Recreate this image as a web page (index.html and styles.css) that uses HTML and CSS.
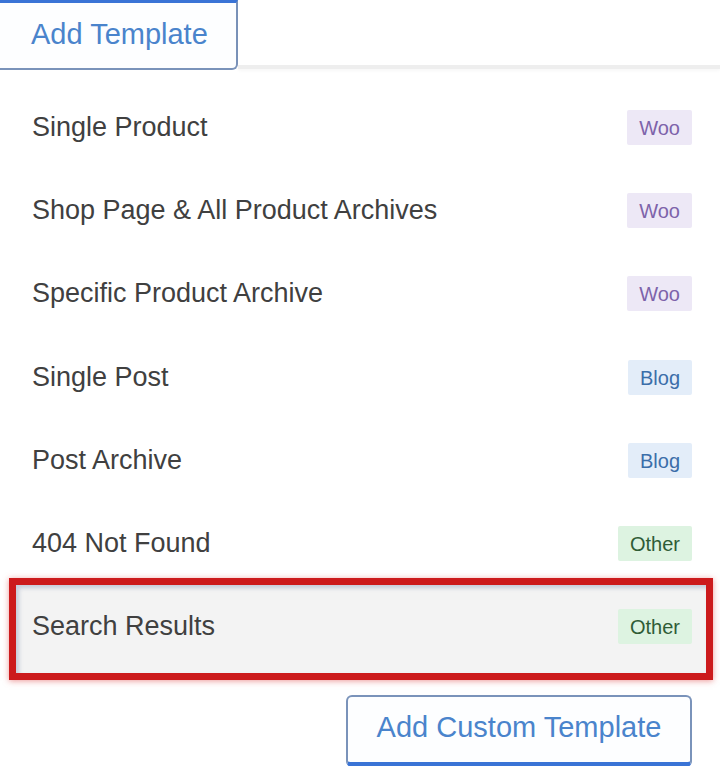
FILE: index.html
```html
<!DOCTYPE html>
<html>
<head>
<meta charset="utf-8">
<link rel="stylesheet" href="styles.css">
</head>
<body>
<div class="page">
  <div class="tabs">
    <button class="tab-btn">Add Template</button>
    <div class="tab-line"></div>
  </div>
  <ul class="list">
    <li class="row"><span class="name">Single Product</span><span class="badge woo">Woo</span></li>
    <li class="row"><span class="name">Shop Page &amp; All Product Archives</span><span class="badge woo">Woo</span></li>
    <li class="row"><span class="name">Specific Product Archive</span><span class="badge woo">Woo</span></li>
    <li class="row"><span class="name">Single Post</span><span class="badge blog">Blog</span></li>
    <li class="row"><span class="name">Post Archive</span><span class="badge blog">Blog</span></li>
    <li class="row"><span class="name">404 Not Found</span><span class="badge other">Other</span></li>
    <li class="row active"><span class="name">Search Results</span><span class="badge other">Other</span><span class="mark"></span></li>
  </ul>
  <div class="footer">
    <button class="custom-btn">Add Custom Template</button>
  </div>
</div>
</body>
</html>
```

FILE: styles.css
```css
html, body {
  margin: 0;
  padding: 0;
  background: #ffffff;
  overflow: hidden;
}
.page {
  width: 720px;
  height: 766px;
  font-family: "Liberation Sans", Arial, sans-serif;
  overflow: hidden;
}
.tabs {
  display: flex;
  align-items: stretch;
  height: 70px;
}
.tab-btn {
  margin-left: -10px;
  width: 248px;
  height: 70px;
  box-sizing: border-box;
  border: 2px solid #7a93ba;
  border-top: 3px solid #3a74d6;
  border-radius: 0 0 6px 0;
  background: #fdfeff;
  color: #4a84cc;
  font-family: "Liberation Sans", Arial, sans-serif;
  font-size: 29px;
  text-align: left;
  padding: 0 0 2px 39px;
}
.tab-line {
  flex: 1;
  border-bottom: 4px solid #eeeeee;
  box-shadow: 0 2px 3px rgba(0, 0, 0, 0.03);
  margin-bottom: 1px;
}
.list {
  list-style: none;
  margin: 0;
  padding: 16px 0 0 0;
}
.row {
  position: relative;
  height: 83.17px;
  box-sizing: border-box;
  padding: 0 28px 0 32px;
  display: flex;
  align-items: center;
  justify-content: space-between;
}
.name {
  font-size: 27px;
  color: #404040;
}
.badge {
  height: 35px;
  line-height: 36px;
  padding: 0 12px;
  font-size: 20px;
  border-radius: 2px;
}
.woo {
  background: #ede8f6;
  color: #7d63aa;
}
.blog {
  background: #e3edf9;
  color: #3b6ea9;
}
.other {
  background: #ddf3e1;
  color: #2f5c36;
}
.active {
  z-index: 0;
}
.mark {
  position: absolute;
  z-index: -1;
  top: -7px;
  bottom: -12px;
  left: 9px;
  right: 7px;
  background: #f3f3f3;
  border: 7px solid #cc1a1c;
  box-shadow: 0 1px 6px rgba(220, 50, 50, 0.5), inset 3px 3px 4px rgba(110, 130, 170, 0.35);
  pointer-events: none;
}
.footer {
  display: flex;
  justify-content: flex-end;
  padding: 27px 28px 0 0;
}
.custom-btn {
  width: 346px;
  height: 72px;
  box-sizing: border-box;
  border: 2px solid #7a93ba;
  border-bottom: 5px solid #3a74d6;
  border-radius: 6px;
  background: #fdfeff;
  color: #4a84cc;
  font-family: "Liberation Sans", Arial, sans-serif;
  font-size: 29px;
  padding: 0 0 4px 0;
}
```
